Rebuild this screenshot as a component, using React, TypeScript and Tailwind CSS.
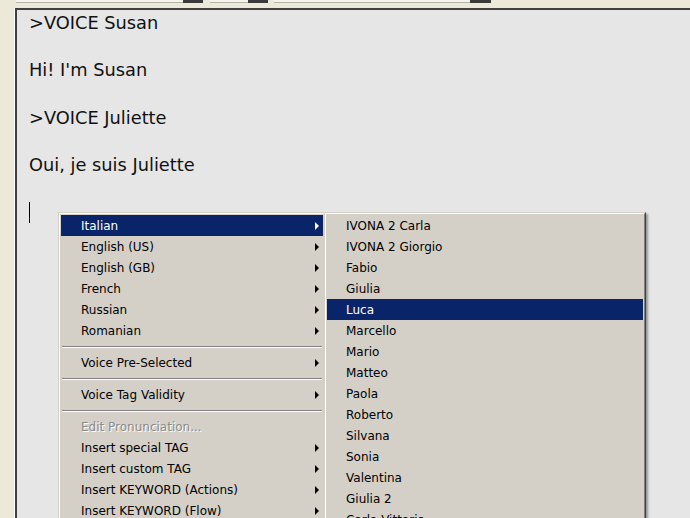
import React from 'react';

// Classic Windows editor with a cascading context menu (voice picker)

const langs = ['Italian', 'English (US)', 'English (GB)', 'French', 'Russian', 'Romanian'];

const voices = [
  'IVONA 2 Carla',
  'IVONA 2 Giorgio',
  'Fabio',
  'Giulia',
  'Luca',
  'Marcello',
  'Mario',
  'Matteo',
  'Paola',
  'Roberto',
  'Silvana',
  'Sonia',
  'Valentina',
  'Giulia 2',
  'Carla Vittoria',
];

const uiFont = { fontFamily: '"DejaVu Sans", Verdana, sans-serif' };

function Arrow({ white }: { white?: boolean }) {
  return (
    <span
      className={`h-0 w-0 border-y-[4px] border-l-[4px] border-y-transparent ${
        white ? 'border-l-white' : 'border-l-black'
      }`}
    />
  );
}

function Item({
  label,
  active,
  arrow,
  disabled,
  pad = 'pl-[20px]',
}: {
  label: string;
  active?: boolean;
  arrow?: boolean;
  disabled?: boolean;
  pad?: string;
}) {
  return (
    <div
      className={`flex h-[21px] items-center justify-between pr-[4px] ${pad} text-[12px] ${
        active ? 'bg-[#0a246a] text-white' : disabled ? 'text-[#8a8a8a]' : 'text-black'
      }`}
    >
      <span className={disabled ? '[text-shadow:1px_1px_0_#ffffff]' : ''}>{label}</span>
      {arrow && <Arrow white={active} />}
    </div>
  );
}

function Sep() {
  return (
    <div className="flex h-[11px] flex-col justify-center px-[1px]">
      <div className="h-px bg-[#808080]" />
      <div className="h-px bg-white" />
    </div>
  );
}

function MenuBox({ className, children }: { className: string; children: React.ReactNode }) {
  return (
    <div
      className={`absolute border border-[#d4d0c8] border-r-[#404040] border-b-[#404040] bg-[#d4d0c8] shadow-[2px_2px_2px_rgba(0,0,0,0.35)] ${className}`}
      style={uiFont}
    >
      <div className="border border-white border-r-[#808080] border-b-[#808080] p-[1px]">{children}</div>
    </div>
  );
}

export default function App() {
  return (
    <div className="relative flex h-[518px] w-[690px] flex-col overflow-hidden bg-[#ece9d8]">
      {/* toolbar remnants: bottoms of combo boxes */}
      <div className="flex h-[8px] items-start">
        <div className="ml-[16px] h-[3px] w-[167px] border-b border-[#b5b2a6] bg-[#f4f3ee]" />
        <div className="h-[3px] w-[20px] bg-[#3a3a3a]" />
        <div className="ml-[7px] h-[3px] w-[38px] border-b border-[#b5b2a6] bg-[#f4f3ee]" />
        <div className="h-[3px] w-[20px] bg-[#3a3a3a]" />
        <div className="ml-[6px] h-[3px] w-[196px] border-b border-[#b5b2a6] bg-[#f4f3ee]" />
        <div className="h-[3px] w-[21px] bg-[#3a3a3a]" />
      </div>

      <div className="flex flex-1">
        <div className="w-[15px] border-r border-white" />
        <div className="flex-1 border-t-[2px] border-l-[2px] border-t-[#404040] border-l-[#404040] bg-[#e6e6e6]">
          <div className="pt-[1px] pl-[12px] text-[17.8px] leading-[23.65px] text-[#111]" style={uiFont}>
            <div>&gt;VOICE Susan</div>
            <div>&nbsp;</div>
            <div>Hi! I'm Susan</div>
            <div>&nbsp;</div>
            <div>&gt;VOICE Juliette</div>
            <div>&nbsp;</div>
            <div>Oui, je suis Juliette</div>
            <div>&nbsp;</div>
            <div className="flex h-[23.65px] items-center">
              <span className="h-[21px] w-px bg-black" />
            </div>
          </div>
        </div>
      </div>

      {/* context menu */}
      <MenuBox className="left-[58px] top-[212px] w-[268px]">
        {langs.map((l, i) => (
          <Item key={l} label={l} active={i === 0} arrow />
        ))}
        <Sep />
        <Item label="Voice Pre-Selected" arrow />
        <Sep />
        <Item label="Voice Tag Validity" arrow />
        <Sep />
        <Item label="Edit Pronunciation..." disabled />
        <Item label="Insert special TAG" arrow />
        <Item label="Insert custom TAG" arrow />
        <Item label="Insert KEYWORD (Actions)" arrow />
        <Item label="Insert KEYWORD (Flow)" arrow />
      </MenuBox>

      {/* voice submenu */}
      <MenuBox className="left-[324px] top-[212px] w-[322px]">
        {voices.map((v) => (
          <Item key={v} label={v} active={v === 'Luca'} pad="pl-[19px]" />
        ))}
      </MenuBox>
    </div>
  );
}
